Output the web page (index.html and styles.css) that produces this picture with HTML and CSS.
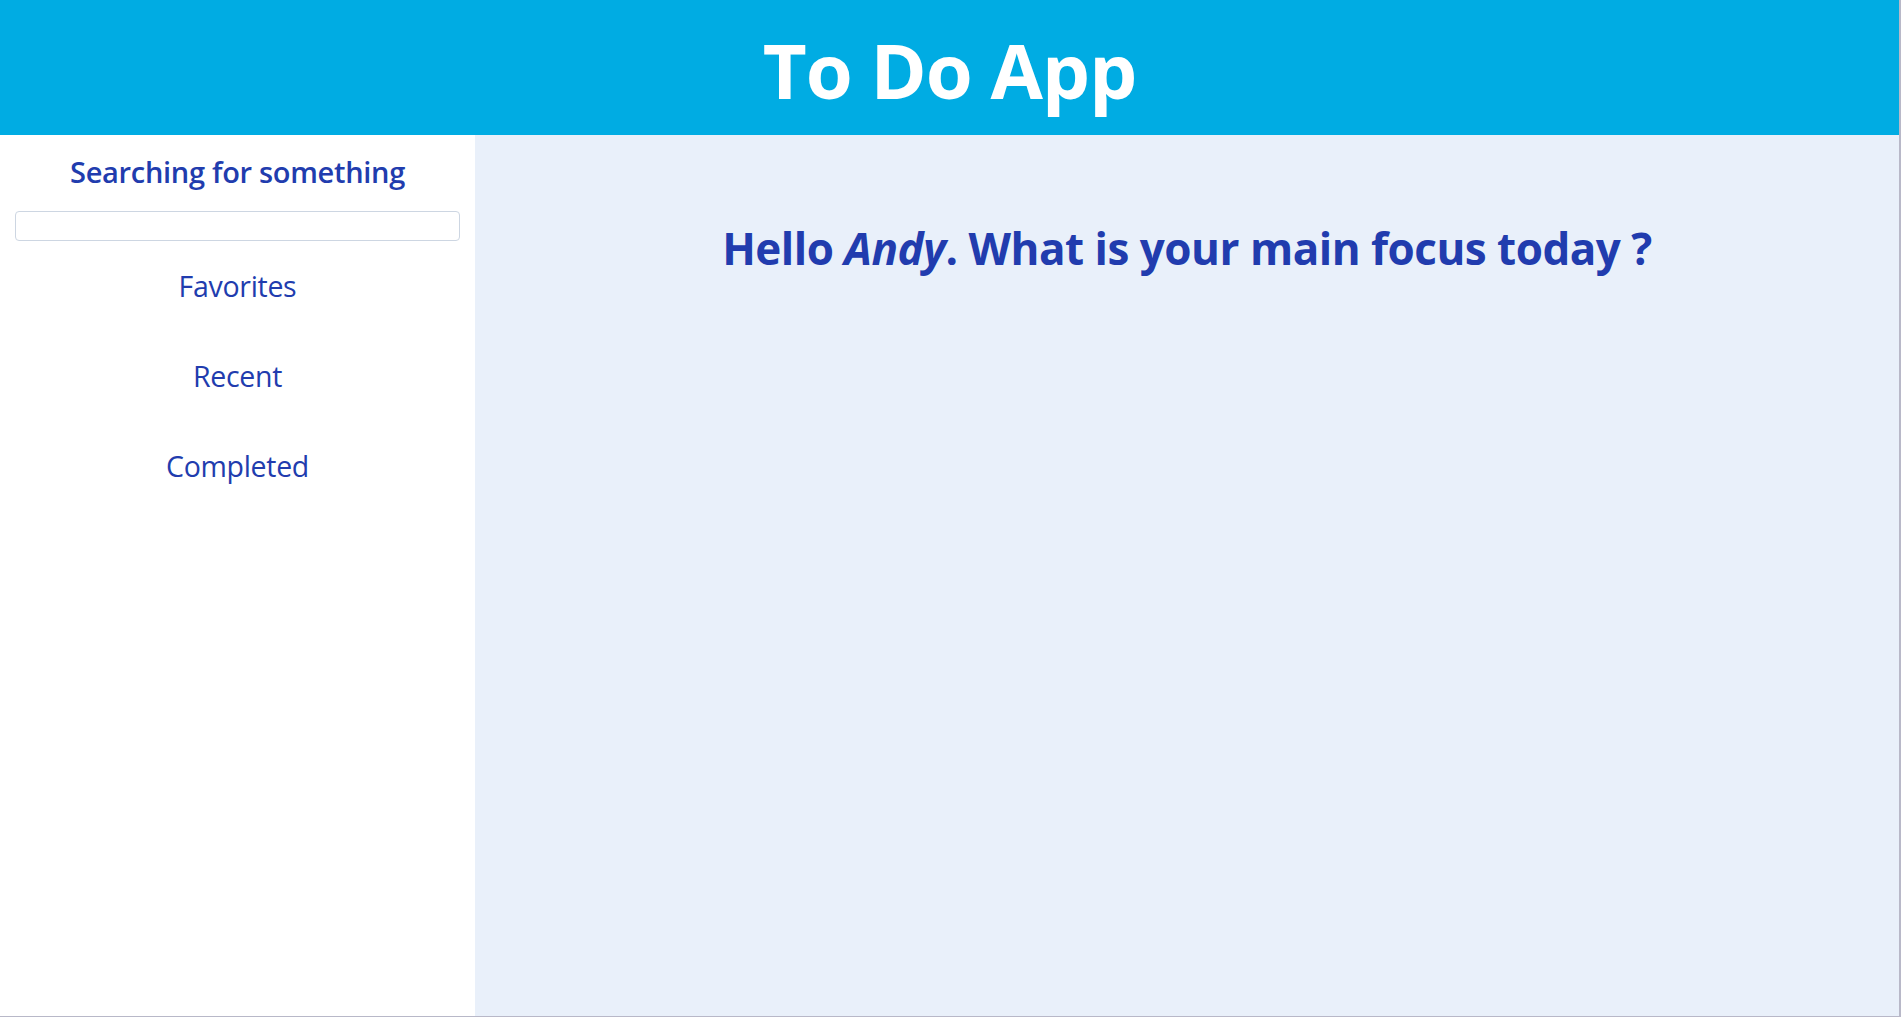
FILE: index.html
```html
<!DOCTYPE html>
<html lang="en">
<head>
<meta charset="utf-8">
<title>To Do App</title>
<link rel="stylesheet" href="styles.css">
</head>
<body>
<div class="app">
  <header class="topbar">
    <h1 class="title">To Do App</h1>
  </header>
  <div class="layout">
    <aside class="sidebar">
      <h3 class="search-title">Searching for something</h3>
      <input class="search-input" type="text">
      <nav class="menu">
        <a class="menu-item">Favorites</a>
        <a class="menu-item">Recent</a>
        <a class="menu-item">Completed</a>
      </nav>
    </aside>
    <main class="content">
      <h2 class="greeting">Hello <em>Andy</em>. What is your main focus today ?</h2>
    </main>
  </div>
</div>
</body>
</html>
```
FILE: styles.css
```css
* { box-sizing: border-box; }
html, body { margin: 0; padding: 0; }
body {
  background: #b8b8c8;
  font-family: "Open Sans", "Noto Sans", sans-serif;
  width: 1901px;
  height: 1017px;
  overflow: hidden;
}
.app {
  width: 1899px;
  height: 1016px;
  display: flex;
  flex-direction: column;
  background: #e9f0fa;
}
.topbar {
  height: 135px;
  background: #00ace3;
  display: flex;
  align-items: center;
  justify-content: center;
}
.title {
  margin: 0;
  color: #ffffff;
  font-size: 76px;
  font-weight: 700;
  letter-spacing: -1px;
  line-height: 1;
  padding-top: 4px;
}
.layout {
  flex: 1;
  display: grid;
  grid-template-columns: 475px 1fr;
}
.sidebar {
  background: #ffffff;
  display: flex;
  flex-direction: column;
  align-items: center;
  padding: 17px 15px 0 15px;
}
.search-title {
  margin: 0;
  color: #213cae;
  font-size: 29px;
  font-weight: 600;
  line-height: 40px;
  letter-spacing: -0.3px;
}
.search-input {
  margin-top: 19px;
  width: 445px;
  height: 30px;
  border: 1px solid #cdd6e2;
  border-radius: 4px;
  background: #fff;
}
.menu {
  display: flex;
  flex-direction: column;
  align-items: center;
  gap: 50px;
  margin-top: 25px;
}
.menu-item {
  color: #213cae;
  font-size: 28.5px;
  line-height: 40px;
  letter-spacing: -0.3px;
}
.content {
  display: flex;
  justify-content: center;
  align-items: flex-start;
}
.greeting {
  margin: 0;
  margin-top: 83px;
  color: #213cae;
  font-size: 44px;
  font-weight: 700;
  letter-spacing: -0.5px;
  line-height: 60px;
}
.greeting em { font-style: italic; }
```
